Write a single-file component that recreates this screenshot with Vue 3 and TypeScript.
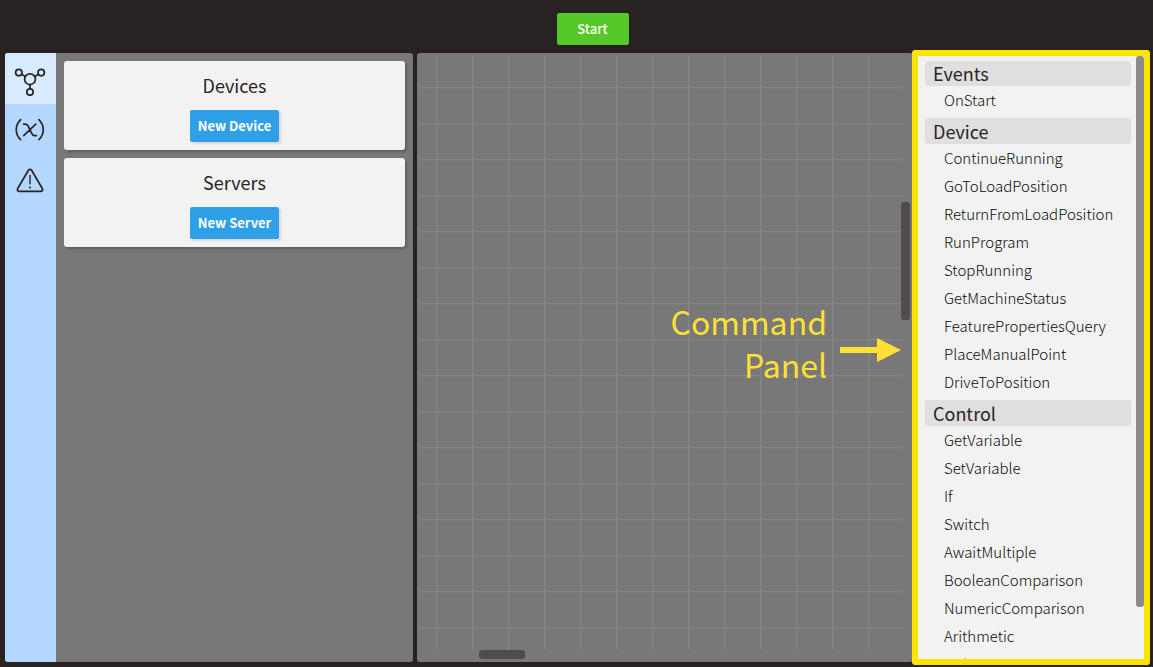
<script setup lang="ts">
interface CommandGroup {
  name: string
  commands: string[]
}

const groups: CommandGroup[] = [
  { name: 'Events', commands: ['OnStart'] },
  {
    name: 'Device',
    commands: [
      'ContinueRunning',
      'GoToLoadPosition',
      'ReturnFromLoadPosition',
      'RunProgram',
      'StopRunning',
      'GetMachineStatus',
      'FeaturePropertiesQuery',
      'PlaceManualPoint',
      'DriveToPosition',
    ],
  },
  {
    name: 'Control',
    commands: [
      'GetVariable',
      'SetVariable',
      'If',
      'Switch',
      'AwaitMultiple',
      'BooleanComparison',
      'NumericComparison',
      'Arithmetic',
      'String',
    ],
  },
]

const resources = [
  { title: 'Devices', action: 'New Device' },
  { title: 'Servers', action: 'New Server' },
]
</script>

<template>
  <div class="app">
    <header class="toolbar">
      <button type="button" class="btn start">Start</button>
    </header>

    <main class="workspace">
      <section class="side">
        <nav class="tabs">
          <button type="button" class="tab active" aria-label="Devices">
            <svg width="32" height="32" viewBox="0 0 32 32">
              <circle cx="16" cy="16.2" r="5.4" />
              <circle cx="4.8" cy="9.6" r="3.2" />
              <circle cx="27.2" cy="9.6" r="3.2" />
              <circle cx="16" cy="29" r="3.2" />
              <path d="M7.600 11.200l3.700 2.200M24.400 11.200l-3.700 2.200M16 21.600v4.200" />
            </svg>
          </button>
          <button type="button" class="tab" aria-label="Variables">
            <svg width="32" height="32" viewBox="0 0 32 32">
              <path d="M6.600 5.600C.8 11.500.8 19.800 6.600 25.700M24.900 5.600c5.800 5.900 5.800 14.200 0 20.100" />
              <path d="M9.700 10.200h1.800c1.500 0 2.100.8 2.800 2.200l3.400 7c.7 1.400 1.300 2.200 2.800 2.200h1.800M21.800 10.200L9.700 21.600" />
            </svg>
          </button>
          <button type="button" class="tab" aria-label="Warnings">
            <svg width="32" height="32" viewBox="0 0 32 32">
              <path d="M14.400 5.300c.8-1.300 2.400-1.300 3.200 0l10.700 18.200c.8 1.400 0 2.900-1.600 2.900H5.300c-1.600 0-2.400-1.500-1.600-2.900z" />
              <path class="thin" d="M16 10.500v8.300" />
              <circle class="dot" cx="16" cy="22.500" r="1.100" />
            </svg>
          </button>
        </nav>
        <div class="cards">
          <article v-for="r in resources" :key="r.title" class="card">
            <h2>{{ r.title }}</h2>
            <button type="button" class="btn primary">{{ r.action }}</button>
          </article>
        </div>
      </section>

      <section class="canvas">
        <div class="grid"></div>
        <div class="track vertical"><span class="thumb"></span></div>
        <div class="track horizontal"><span class="thumb"></span></div>
        <div class="callout">
          <p>Command<br />Panel</p>
          <svg width="61" height="26" viewBox="0 0 61 26">
            <path d="M0 10h37V1l24 12-24 12v-9H0z" />
          </svg>
        </div>
      </section>

      <aside class="commands">
        <div class="list">
          <section v-for="g in groups" :key="g.name" class="group">
            <h3>{{ g.name }}</h3>
            <ul>
              <li v-for="c in g.commands" :key="c">{{ c }}</li>
            </ul>
          </section>
        </div>
        <div class="bar"><span></span></div>
      </aside>
    </main>
  </div>
</template>

<style>
body {
  margin: 0;
  background: #282222;
}
</style>

<style scoped>
.app {
  box-sizing: border-box;
  display: flex;
  flex-direction: column;
  height: 100vh;
  padding: 0 3px 5px 5px;
  overflow: hidden;
  background: #282222;
  color: #282424;
  font-family: "Noto Sans CJK SC", "Noto Sans", sans-serif;
}

.toolbar {
  display: flex;
  justify-content: center;
  padding: 13px 0 8px 30px;
}

.btn {
  height: 32px;
  padding: 0 8px;
  border: 0;
  border-radius: 2px;
  color: #fff;
  font: 700 13px/32px "Noto Sans CJK SC", "Noto Sans", sans-serif;
  box-shadow: 2px 2px 2px rgba(0, 0, 0, 0.1);
}

.start {
  width: 72px;
  background: #56c82a;
  font-weight: 500;
}

.primary {
  background: #2fa0e8;
}

.workspace {
  display: flex;
  flex: 1;
  min-height: 0;
}

.side {
  display: flex;
  flex: 0 0 408px;
  margin-right: 4px;
  overflow: hidden;
  border-radius: 3px;
  background: #787878;
}

.tabs {
  display: flex;
  flex: 0 0 51px;
  flex-direction: column;
  background: #b3d7ff;
}

.tab {
  display: flex;
  align-items: center;
  justify-content: center;
  height: 51px;
  padding: 0 1px 0 0;
  border: 0;
  background: transparent;
}

.tab.active {
  background: #d9ebff;
}

.tab svg {
  overflow: visible;
  fill: none;
  stroke: #282424;
  stroke-width: 1.7;
  stroke-linecap: round;
  stroke-linejoin: round;
}

.tab .thin {
  stroke-width: 1.4;
}

.tab .dot {
  fill: #282424;
  stroke: none;
}

.cards {
  display: flex;
  flex: 1;
  flex-direction: column;
  gap: 8px;
  padding: 8px;
}

.card {
  display: flex;
  flex-direction: column;
  align-items: center;
  padding: 10px 0 8px;
  border-radius: 3px;
  background: #f2f2f2;
  box-shadow: 2px 2px 3px rgba(0, 0, 0, 0.22);
}

h2 {
  margin: 0 0 11px;
  font-size: 18px;
  font-weight: 400;
  line-height: 28px;
}

.canvas {
  position: relative;
  display: grid;
  flex: 1;
  grid-template: 1fr 9px / 1fr 9px;
  margin-right: -1px;
  padding: 3px;
  border-radius: 3px;
  background: #787878;
}

.grid {
  background-image:
    linear-gradient(to right, #858585 1px, #7c7c7c 1px, #7c7c7c 2px, transparent 2px),
    linear-gradient(to bottom, #858585 1px, #7c7c7c 1px, #7c7c7c 2px, transparent 2px);
  background-position: 16px 0, 0 31px;
  background-size: 36px 36px;
}

.track {
  display: grid;
}

.vertical {
  grid-template-rows: 146fr 118fr 330fr;
}

.vertical .thumb {
  grid-row: 2;
}

.horizontal {
  grid-template-columns: 59fr 46fr 376fr;
}

.horizontal .thumb {
  grid-column: 2;
}

.thumb {
  border-radius: 3px;
  background: #504c4b;
}

.callout {
  position: absolute;
  top: 247px;
  right: 12px;
  display: flex;
  align-items: center;
  gap: 13px;
  color: #ffe135;
}

.callout p {
  margin: 0;
  font-size: 32px;
  line-height: 43px;
  text-align: right;
}

.callout svg {
  margin-top: 14px;
  fill: #ffe135;
}

.commands {
  position: relative;
  display: flex;
  flex: 0 0 226px;
  margin: -3px 0;
  border: 6px solid #ffe400;
  border-radius: 3px;
  background: #f2f2f2;
}

.list {
  flex: 1;
  padding: 5px 5px 0 7px;
  overflow: hidden;
}

.group + .group {
  margin-top: 4px;
  border-top: 1px solid #dfdfdf;
}

h3 {
  margin: 0;
  padding-left: 8px;
  border-radius: 3px;
  background: #dfdfdf;
  font-size: 18px;
  font-weight: 400;
  line-height: 25px;
}

ul {
  margin: 0;
  padding: 0 0 0 19px;
  list-style: none;
}

li {
  color: #0c0a0a;
  font-size: 15px;
  font-weight: 300;
  line-height: 28px;
}

.bar {
  display: grid;
  flex: 0 0 8px;
  grid-template-rows: 551fr 52fr;
}

.bar span {
  border-radius: 3px;
  background: #8b8a88;
}
</style>
